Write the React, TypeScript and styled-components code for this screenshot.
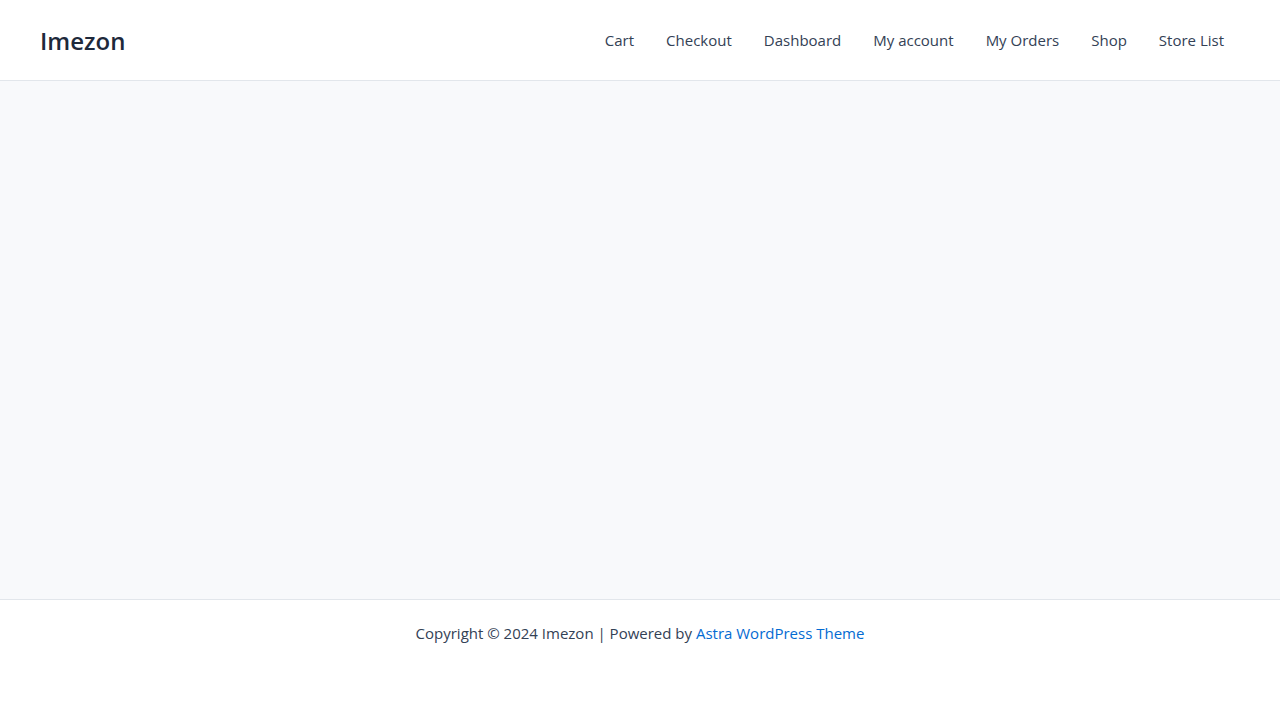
import React from "react";
import styled, { createGlobalStyle } from "styled-components";

const GlobalStyle = createGlobalStyle`
  html, body {
    margin: 0;
    padding: 0;
    height: 100%;
  }
  body {
    font-family: "Segoe UI", "Open Sans", "Noto Sans", sans-serif;
    color: #334155;
    background: #ffffff;
  }
  #root {
    min-height: 100%;
  }
`;

const Page = styled.div`
  display: flex;
  flex-direction: column;
  min-height: 720px;
`;

const Header = styled.header`
  height: 80px;
  display: flex;
  align-items: center;
  justify-content: space-between;
  padding: 0 40px;
  background: #ffffff;
  border-bottom: 1px solid #e2e6eb;
`;

const Logo = styled.a`
  font-size: 24px;
  font-weight: 600;
  color: #1e293b;
  text-decoration: none;
`;

const Nav = styled.nav`
  display: flex;
  align-items: center;
`;

const NavItem = styled.a`
  font-size: 15px;
  color: #334155;
  text-decoration: none;
  padding: 0 16px;
  line-height: 80px;
`;

const Main = styled.main`
  height: 518px;
  background: #f8f9fb;
`;

const Footer = styled.footer`
  flex: 1;
  border-top: 1px solid #e2e6eb;
  background: #ffffff;
  display: flex;
  justify-content: center;
  padding-top: 23px;
  font-size: 15px;
`;

const FooterLink = styled.a`
  color: #046bd2;
  text-decoration: none;
`;

const links = ["Cart", "Checkout", "Dashboard", "My account", "My Orders", "Shop", "Store List"];

export default function App() {
  return (
    <Page>
      <GlobalStyle />
      <Header>
        <Logo href="#">Imezon</Logo>
        <Nav>
          {links.map((l) => (
            <NavItem key={l} href="#">
              {l}
            </NavItem>
          ))}
        </Nav>
      </Header>
      <Main />
      <Footer>
        <div>
          Copyright © 2024 Imezon | Powered by <FooterLink href="#">Astra WordPress Theme</FooterLink>
        </div>
      </Footer>
    </Page>
  );
}
